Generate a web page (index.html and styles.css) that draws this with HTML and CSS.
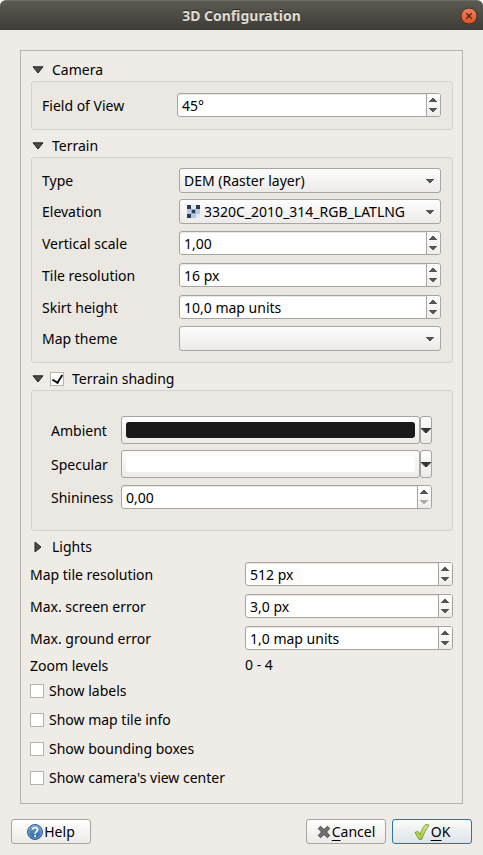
FILE: index.html
```html
<!DOCTYPE html>
<html lang="en">
<head>
<meta charset="utf-8">
<title>3D Configuration</title>
<link rel="stylesheet" href="styles.css">
</head>
<body>
<svg class="sprites" aria-hidden="true">
  <symbol id="down" viewBox="0 0 8 4"><path d="M0 0h8v1h-1v1h-1v1h-1v1h-2v-1h-1v-1h-1v-1h-1z"/></symbol>
  <symbol id="up" viewBox="0 0 8 4"><path d="M0 4h8v-1h-1v-1h-1v-1h-1v-1h-2v1h-1v1h-1v1h-1z"/></symbol>
  <symbol id="expanded" viewBox="0 0 12 8"><path d="M1 .8h10L6 7z" fill="#4a4a4a" stroke="#252525" stroke-width="1" stroke-linejoin="round"/></symbol>
  <symbol id="collapsed" viewBox="0 0 8 12"><path d="M1 1v10l6-5z" fill="#4a4a4a" stroke="#252525" stroke-width="1" stroke-linejoin="round"/></symbol>
</svg>
<div class="window">
  <header class="titlebar">
    <h1>3D Configuration</h1>
    <button class="close" type="button" aria-label="Close"><svg width="18" height="18" viewBox="0 0 18 18">
      <defs><linearGradient id="orange" x2="0" y2="1"><stop offset="0" stop-color="#f2825c"/><stop offset="1" stop-color="#e2501c"/></linearGradient></defs>
      <circle cx="9" cy="9" r="8" fill="url(#orange)" stroke="#37342e"/>
      <path d="M6.3 6.3l5.4 5.4M11.7 6.3l-5.4 5.4" stroke="#46281c" stroke-width="1.3"/>
    </svg></button>
  </header>
  <form class="dialog">
    <main class="frame">
      <section>
        <button class="toggle" type="button"><svg width="12" height="8"><use href="#expanded"/></svg>Camera</button>
        <div class="group camera">
          <label for="fov">Field of View</label>
          <div class="spin"><input id="fov" type="text" value="45°"><div class="steps"><button type="button" aria-label="Up"><svg width="8" height="4"><use href="#up"/></svg></button><button type="button" aria-label="Down"><svg width="8" height="4"><use href="#down"/></svg></button></div></div>
        </div>
      </section>

      <section>
        <button class="toggle" type="button"><svg width="12" height="8"><use href="#expanded"/></svg>Terrain</button>
        <div class="group terrain">
          <label for="type">Type</label>
          <div class="combo"><select id="type"><option>DEM (Raster layer)</option></select><svg class="arrow" width="8" height="4"><use href="#down"/></svg></div>
          <label for="elevation">Elevation</label>
          <div class="combo raster"><select id="elevation"><option>3320C_2010_314_RGB_LATLNG</option></select>
            <svg class="layer" width="13" height="13" viewBox="0 0 13 13" shape-rendering="crispEdges"><path fill="#b4cbe4" d="M0 0h13v13H0z"/><path fill="#dfe9f4" d="M4 0h5v4H4zM9 9h4v4H9z"/><path fill="#8fabc9" d="M4 4h5v5H4z"/><path fill="#2e3a4d" d="M0 0h4v4H0zM9 0h4v4H9zM5 5h3v3H5zM0 9h4v4H0z"/></svg>
            <svg class="arrow" width="8" height="4"><use href="#down"/></svg></div>
          <label for="vscale">Vertical scale</label>
          <div class="spin"><input id="vscale" type="text" value="1,00"><div class="steps"><button type="button" aria-label="Up"><svg width="8" height="4"><use href="#up"/></svg></button><button type="button" aria-label="Down"><svg width="8" height="4"><use href="#down"/></svg></button></div></div>
          <label for="tileres">Tile resolution</label>
          <div class="spin"><input id="tileres" type="text" value="16 px"><div class="steps"><button type="button" aria-label="Up"><svg width="8" height="4"><use href="#up"/></svg></button><button type="button" aria-label="Down"><svg width="8" height="4"><use href="#down"/></svg></button></div></div>
          <label for="skirt">Skirt height</label>
          <div class="spin"><input id="skirt" type="text" value="10,0 map units"><div class="steps"><button type="button" aria-label="Up"><svg width="8" height="4"><use href="#up"/></svg></button><button type="button" aria-label="Down"><svg width="8" height="4"><use href="#down"/></svg></button></div></div>
          <label for="theme">Map theme</label>
          <div class="combo"><select id="theme"><option></option></select><svg class="arrow" width="8" height="4"><use href="#down"/></svg></div>
        </div>
      </section>

      <section>
        <div class="heading">
          <button class="toggle" type="button" aria-label="Collapse"><svg width="12" height="8"><use href="#expanded"/></svg></button>
          <label class="check"><input type="checkbox" checked>Terrain shading</label>
        </div>
        <div class="group shading">
          <label for="ambient">Ambient</label>
          <div class="color"><button id="ambient" class="well" type="button"><span class="swatch dark"></span></button><button class="more" type="button" aria-label="Ambient options"><svg width="10" height="5"><use href="#down"/></svg></button></div>
          <label for="specular">Specular</label>
          <div class="color"><button id="specular" class="well" type="button"><span class="swatch"></span></button><button class="more" type="button" aria-label="Specular options"><svg width="10" height="5"><use href="#down"/></svg></button></div>
          <label for="shininess">Shininess</label>
          <div class="spin"><input id="shininess" type="text" value="0,00"><div class="steps"><button type="button" aria-label="Up"><svg width="8" height="4"><use href="#up"/></svg></button><button type="button" aria-label="Down" disabled><svg width="8" height="4"><use href="#down"/></svg></button></div></div>
        </div>
      </section>

      <button class="toggle" type="button"><svg width="12" height="12"><use href="#collapsed"/></svg>Lights</button>

      <div class="general">
        <label for="maptile">Map tile resolution</label>
        <div class="spin"><input id="maptile" type="text" value="512 px"><div class="steps"><button type="button" aria-label="Up"><svg width="8" height="4"><use href="#up"/></svg></button><button type="button" aria-label="Down"><svg width="8" height="4"><use href="#down"/></svg></button></div></div>
        <label for="screenerr">Max. screen error</label>
        <div class="spin"><input id="screenerr" type="text" value="3,0 px"><div class="steps"><button type="button" aria-label="Up"><svg width="8" height="4"><use href="#up"/></svg></button><button type="button" aria-label="Down"><svg width="8" height="4"><use href="#down"/></svg></button></div></div>
        <label for="grounderr">Max. ground error</label>
        <div class="spin"><input id="grounderr" type="text" value="1,0 map units"><div class="steps"><button type="button" aria-label="Up"><svg width="8" height="4"><use href="#up"/></svg></button><button type="button" aria-label="Down"><svg width="8" height="4"><use href="#down"/></svg></button></div></div>
        <label for="zoom">Zoom levels</label>
        <output id="zoom">0 - 4</output>
      </div>

      <div class="options">
        <label class="check"><input type="checkbox">Show labels</label>
        <label class="check"><input type="checkbox">Show map tile info</label>
        <label class="check"><input type="checkbox">Show bounding boxes</label>
        <label class="check"><input type="checkbox">Show camera's view center</label>
      </div>
    </main>

    <footer class="actions">
      <button class="action help" type="button"><svg width="16" height="16" viewBox="0 0 16 16">
        <defs><linearGradient id="blue" x2="0" y2="1"><stop offset="0" stop-color="#6f9fce"/><stop offset="1" stop-color="#2b659f"/></linearGradient></defs>
        <circle cx="8" cy="8" r="7.5" fill="url(#blue)" stroke="#2d5c8c"/><circle cx="8" cy="8" r="6.4" fill="none" stroke="#8fb4d8" stroke-width=".7"/>
        <path d="M5.4 5.7C5.6 2.8 10.7 2.9 10.6 5.8C10.5 7.6 8.1 7.6 8.1 9.8" fill="none" stroke="#fff" stroke-width="1.7"/><circle cx="8.1" cy="12" r="1.1" fill="#fff"/>
      </svg>Help</button>
      <button class="action cancel" type="button"><svg width="14" height="14" viewBox="0 0 14 14">
        <path d="M3.5 1.3L7 4.5l3.5-3.2 2.2 2.2L9.5 7l3.2 3.5-2.2 2.2L7 9.5l-3.5 3.2-2.2-2.2L4.5 7 1.3 3.5z" fill="#707070" stroke="#4b4b4b" stroke-linejoin="round"/>
      </svg><span><u>C</u>ancel</span></button>
      <button class="action ok" type="submit"><svg width="16" height="18" viewBox="0 0 16 18">
        <defs><linearGradient id="green" x2="0" y2="1"><stop offset="0" stop-color="#d5ea8d"/><stop offset="1" stop-color="#a2cb33"/></linearGradient></defs>
        <path d="M1 9.5l2.8-1.2 2.3 3.2C7.4 7.4 9.500 3.600 12 1.200l3 1C12 6.200 9.700 10.700 7.700 16.300L5.200 16.500z" fill="url(#green)" stroke="#7b9d2c" stroke-linejoin="round"/>
      </svg><span><u>O</u>K</span></button>
    </footer>
  </form>
</div>
</body>
</html>
```
FILE: styles.css
```css
* { box-sizing: border-box; }

html { background: #fff; }

body {
  margin: 0;
  color: #000;
  font: 14px/20px "Noto Sans", sans-serif;
}

button, input, select {
  margin: 0;
  padding: 0;
  border: 0;
  background: none;
  color: inherit;
  font: inherit;
}

.sprites {
  position: absolute;
  width: 0;
  height: 0;
}

.window {
  min-height: 100vh;
  border-radius: 6px 6px 0 0;
  background: #efebe7;
}

.titlebar {
  display: grid;
  grid-template-columns: 18px 1fr 18px;
  align-items: center;
  height: 30px;
  padding: 0 5px;
  border-top: 1px solid #6e6b62;
  border-radius: 6px 6px 0 0;
  background: linear-gradient(#5b5951, #3d3c37);
}

.titlebar h1 {
  grid-column: 2;
  margin: 0;
  color: #dfdbd2;
  font-size: 14px;
  line-height: 18px;
  text-align: center;
  text-shadow: 0 -1px #2b2a27;
}

.close { display: flex; }

.dialog { padding: 20px 0 0; }

.frame {
  margin: 0 20px;
  padding: 3px 9px 11px;
  border: 1px solid #b6b2ae;
}

.toggle {
  display: flex;
  align-items: center;
  gap: 8px;
  height: 27px;
  padding: 5px 0 0 2px;
}

.heading { display: flex; }

.heading .check {
  height: 27px;
  padding: 4px 0 0 6px;
}

.heading .check input { margin-right: 8px; }

.group {
  display: grid;
  align-items: center;
  margin-left: 1px;
  padding: 7px 11px 8px 10px;
  border: 1px solid #d5d1cd;
  border-radius: 3px;
  background: #ebe8e3;
}

.camera { grid-template: 32px / 135px 1fr; }

.terrain { grid-template: repeat(2, 31px) repeat(3, 32px) 31px / 137px 1fr; }

.shading {
  grid-template: repeat(2, 34px) 32px / 70px 1fr;
  padding: 22px 20px 17px 19px;
}

.general {
  display: grid;
  grid-template: repeat(3, 32px) 22px / 215px 1fr;
  align-items: center;
}

.group label, .general label { padding-top: 1px; }

.spin {
  display: flex;
  height: 24px;
  border: 1px solid #a8a4a0;
  border-radius: 3px;
  background: #fff;
  box-shadow: inset 0 1px #e9e8e7;
  overflow: hidden;
}

.spin input {
  flex: 1;
  min-width: 0;
  padding: 2px 0 0 4px;
}

.steps {
  display: grid;
  grid-template-rows: 10px 10px;
  align-content: center;
  width: 14px;
  padding-right: 1px;
  border-left: 1px solid #a8a4a0;
  background: linear-gradient(#fff, #efedeb);
}

.steps button {
  display: grid;
  place-items: center;
  fill: #555;
}

.steps button:disabled { fill: #aaa; }

.combo {
  position: relative;
  height: 25px;
}

.combo select {
  width: 100%;
  height: 100%;
  padding: 0 20px 0 4px;
  border: 1px solid #a8a4a0;
  border-radius: 3px;
  background: linear-gradient(#fdfdfd, #edebe9);
  appearance: none;
}

.combo.raster select { padding-left: 24px; }

.arrow {
  position: absolute;
  top: 11px;
  right: 7px;
  fill: #555;
}

.layer {
  position: absolute;
  top: 6px;
  left: 8px;
}

.color {
  display: flex;
  height: 28px;
}

.well, .more {
  border: 1px solid #a8a4a0;
  border-radius: 3px;
  background: linear-gradient(#fdfdfd, #edebe9);
}

.well {
  flex: 1;
  display: flex;
  padding: 5px 4px;
}

.swatch {
  flex: 1;
  border-radius: 3px;
  background: #fff;
}

.swatch.dark { background: #191919; }

.more {
  display: grid;
  place-items: center;
  width: 12px;
  fill: #333;
}

.check {
  display: flex;
  align-items: center;
}

.check input {
  display: grid;
  place-items: center;
  width: 14px;
  height: 14px;
  margin-right: 5px;
  border: 1px solid #b6b2ae;
  background: #fff;
  appearance: none;
}

.check input:checked::after {
  content: "";
  width: 5px;
  height: 8px;
  margin-bottom: 2px;
  border: solid #111;
  border-width: 0 2px 2px 0;
  transform: rotate(32deg);
}

.options .check { height: 29px; }

.actions {
  display: flex;
  gap: 6px;
  padding: 15px 11px 11px;
}

.action {
  display: flex;
  align-items: center;
  justify-content: center;
  gap: 1px;
  width: 80px;
  height: 25px;
  border: 1px solid #a8a4a0;
  border-radius: 3px;
  background: linear-gradient(#fefefe, #edebe9);
}

.action u { text-underline-offset: 3px; }

.help { margin-right: auto; }

.ok {
  border-color: #2b74a8;
  background: linear-gradient(#fbfcfd, #dde3e7);
}
```
